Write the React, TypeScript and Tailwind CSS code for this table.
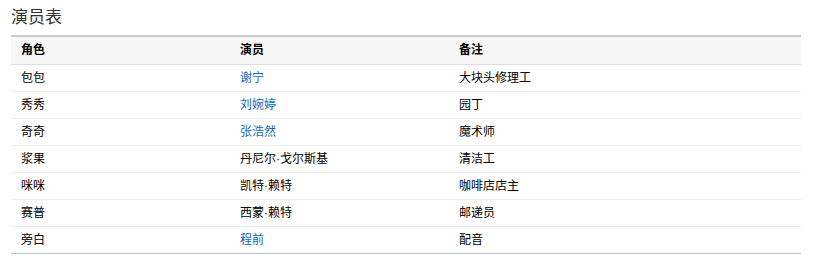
import React from 'react';

type Row = { role: string; actor: string; link?: boolean; note: string };

const rows: Row[] = [
  { role: '包包', actor: '谢宁', link: true, note: '大块头修理工' },
  { role: '秀秀', actor: '刘婉婷', link: true, note: '园丁' },
  { role: '奇奇', actor: '张浩然', link: true, note: '魔术师' },
  { role: '浆果', actor: '丹尼尔·戈尔斯基', note: '清洁工' },
  { role: '咪咪', actor: '凯特·赖特', note: '咖啡店店主' },
  { role: '赛普', actor: '西蒙·赖特', note: '邮递员' },
  { role: '旁白', actor: '程前', link: true, note: '配音' },
];

const App: React.FC = () => {
  return (
    <div
      className="w-[822px] h-[269px] bg-white px-[11px] pt-[5px] text-black"
      style={{ fontFamily: '"Liberation Sans", "Noto Sans CJK SC", sans-serif' }}
    >
      {/* Title */}
      <h2 className="text-[17px] leading-[26px] text-[#333] font-normal">演员表</h2>

      <table className="mt-[4px] w-[790px] table-fixed border-collapse text-[12px]">
        <colgroup>
          <col className="w-[219px]" />
          <col className="w-[219px]" />
          <col />
        </colgroup>
        <thead>
          <tr className="bg-[#f7f7f7] border-t-2 border-t-[#cacaca] border-b border-b-[#dddddd]">
            <th className="h-[28px] pl-[10px] text-left font-bold">角色</th>
            <th className="h-[28px] pl-[10px] text-left font-bold">演员</th>
            <th className="h-[28px] pl-[10px] text-left font-bold">备注</th>
          </tr>
        </thead>
        <tbody>
          {rows.map((r, i) => (
            <tr
              key={r.role}
              className={
                i === rows.length - 1
                  ? 'border-b border-b-[#b3c0cd]'
                  : 'border-b border-b-[#eeeeee]'
              }
            >
              <td className="h-[27px] pl-[10px]">{r.role}</td>
              <td className={r.link ? 'h-[27px] pl-[10px] text-[#1166bb]' : 'h-[27px] pl-[10px]'}>{r.actor}</td>
              <td className="h-[27px] pl-[10px]">{r.note}</td>
            </tr>
          ))}
        </tbody>
      </table>
    </div>
  );
};

export default App;
